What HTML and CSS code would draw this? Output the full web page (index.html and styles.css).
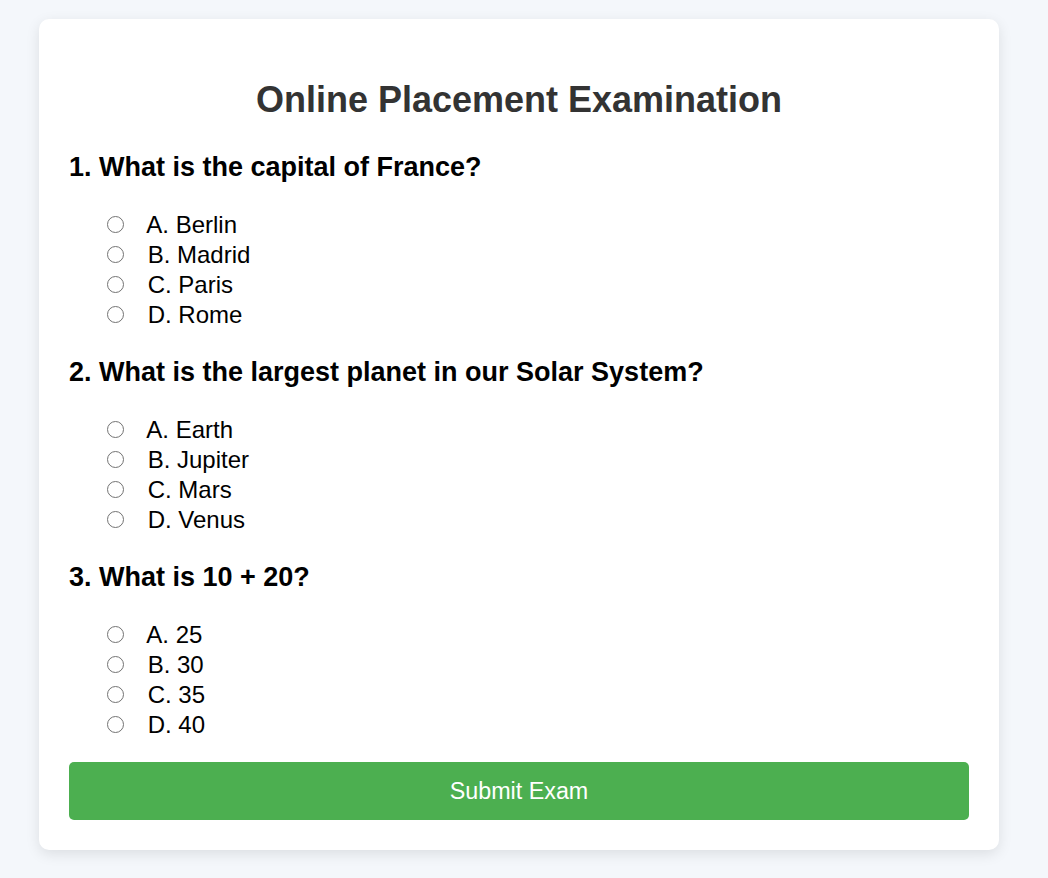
FILE: index.html
```html
<!DOCTYPE html>
<html lang="en">
<head>
<meta charset="utf-8">
<title>Online Placement Examination</title>
<link rel="stylesheet" href="styles.css">
</head>
<body>
<div class="container">
  <h1 class="title">Online Placement Examination</h1>
  <form class="exam">
    <div class="question">
      <h2 class="q-title">1. What is the capital of France?</h2>
      <label class="option"><input type="radio" name="q1"> A. Berlin</label>
      <label class="option"><input type="radio" name="q1"> B. Madrid</label>
      <label class="option"><input type="radio" name="q1"> C. Paris</label>
      <label class="option"><input type="radio" name="q1"> D. Rome</label>
    </div>
    <div class="question">
      <h2 class="q-title">2. What is the largest planet in our Solar System?</h2>
      <label class="option"><input type="radio" name="q2"> A. Earth</label>
      <label class="option"><input type="radio" name="q2"> B. Jupiter</label>
      <label class="option"><input type="radio" name="q2"> C. Mars</label>
      <label class="option"><input type="radio" name="q2"> D. Venus</label>
    </div>
    <div class="question">
      <h2 class="q-title">3. What is 10 + 20?</h2>
      <label class="option"><input type="radio" name="q3"> A. 25</label>
      <label class="option"><input type="radio" name="q3"> B. 30</label>
      <label class="option"><input type="radio" name="q3"> C. 35</label>
      <label class="option"><input type="radio" name="q3"> D. 40</label>
    </div>
    <button type="button" class="submit">Submit Exam</button>
  </form>
</div>
</body>
</html>
```
FILE: styles.css
```css
html, body {
  margin: 0;
  padding: 0;
}
body {
  background: #f4f7fb;
  font-family: "Liberation Sans", Arial, sans-serif;
  padding: 19px 0 28px;
}
.container {
  width: 900px;
  margin-left: 39px;
  padding: 30px;
  background: #ffffff;
  border-radius: 10px;
  box-shadow: 0 4px 14px rgba(0, 0, 0, 0.1);
}
.title {
  margin: 30px 0 31px;
  font-size: 36px;
  line-height: 42px;
  font-weight: bold;
  text-align: center;
  color: #333333;
}
.exam {
  margin: 0;
}
.question + .question {
  margin-top: 27px;
}
.q-title {
  margin: 0 0 28px;
  font-size: 27px;
  line-height: 30px;
  font-weight: bold;
  color: #000000;
}
.option {
  display: flex;
  align-items: center;
  padding-left: 38px;
  font-size: 24px;
  line-height: 30px;
  color: #000000;
  white-space: pre;
}
.option input {
  -webkit-appearance: none;
  appearance: none;
  width: 17px;
  height: 17px;
  margin: 0 17px 2px 0;
  border: 1.4px solid #737373;
  border-radius: 50%;
  background: #ffffff;
  flex: none;
}
.submit {
  display: block;
  width: 100%;
  height: 58px;
  margin-top: 22px;
  border: none;
  border-radius: 5px;
  background: #4caf50;
  color: #ffffff;
  font-family: "Liberation Sans", Arial, sans-serif;
  font-size: 23.3px;
  cursor: pointer;
}
```
